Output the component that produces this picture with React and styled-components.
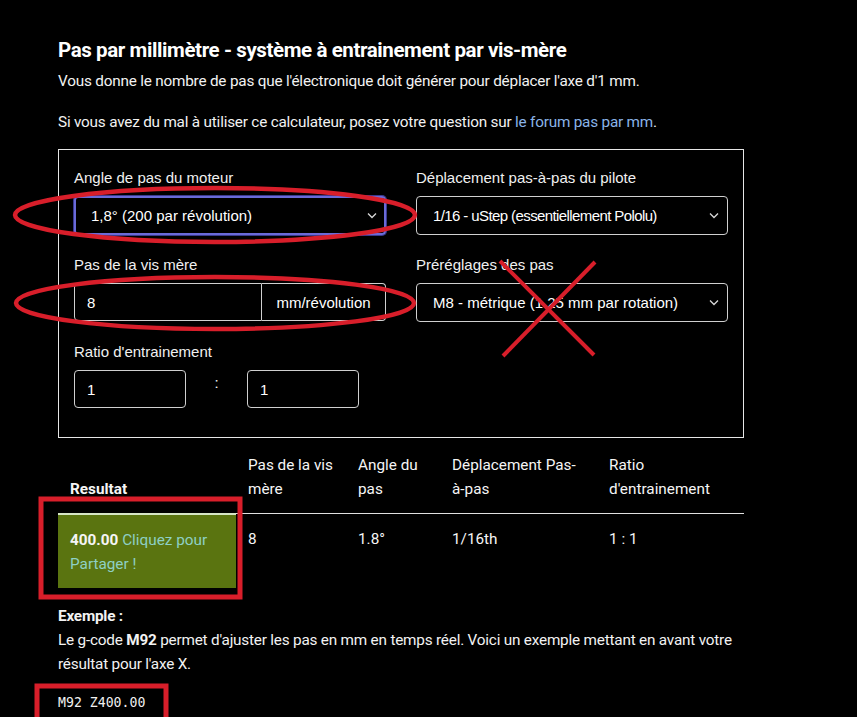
import React from 'react';
import styled, { createGlobalStyle } from 'styled-components';

const GlobalStyle = createGlobalStyle`
	html, body {
		margin: 0;
		padding: 0;
		background: #000000;
	}
	body {
		font-family: Roboto, "Liberation Sans", sans-serif;
		color: #ffffff;
	}
`

const Page = styled.div`
	position: relative;
	width: 857px;
	height: 717px;
	overflow: hidden;
	background: #000;
	padding: 37px 0 0 58px;
	box-sizing: border-box;
`

const Title = styled.h2`
	margin: 0;
	font-size: 20.5px;
	font-weight: 700;
	letter-spacing: -0.4px;
	line-height: 26px;
`

const Text = styled.p`
	margin: ${props => props.margin || '0'};
	font-size: 15.3px;
	line-height: 24px;
	letter-spacing: -0.2px;
	color: #f2f2f2;
	width: ${props => props.width || 'auto'};
`

const Link = styled.a`
	color: #8ab4e8;
	text-decoration: none;
`

const FormBox = styled.div`
	width: 686px;
	height: 289px;
	box-sizing: border-box;
	border: 1px solid #e6e6e6;
	margin-top: 15px;
	padding: 18px 15px 0 15px;
	display: grid;
	grid-template-columns: 312px 312px;
	column-gap: 30px;
	align-content: start;
`

const Field = styled.div`
	display: flex;
	flex-direction: column;
	margin-bottom: 20px;
`

const Label = styled.label`
	font-family: "Liberation Sans", Arial, sans-serif;
	font-size: 15px;
	line-height: 20px;
	color: #f0f0f0;
	margin-bottom: 8px;
`

const SelectBox = styled.div`
	height: 39px;
	box-sizing: border-box;
	border: ${props => props.focused ? '2px solid #6a6ad8' : '1px solid #d0d0d0'};
	box-shadow: ${props => props.focused ? '0 0 0 1px #3a3a90' : 'none'};
	border-radius: 4px;
	display: flex;
	align-items: center;
	justify-content: space-between;
	padding: 0 ${props => props.focused ? '7px' : '8px'} 0 ${props => props.focused ? '15px' : '16px'};
	font-family: "Liberation Sans", Arial, sans-serif;
	font-size: 15px;
	letter-spacing: ${props => props.tight ? '-0.6px' : '0'};
	color: #fff;
`

const Chevron = () => (
	<svg width="10" height="7" viewBox="0 0 10 7" fill="none">
		<path d="M1 1.5 L5 5.5 L9 1.5" stroke="#d8d8d8" strokeWidth="1.3" />
	</svg>
)

const InputGroup = styled.div`
	display: flex;
	height: 38px;
`

const TextInput = styled.div`
	width: ${props => props.width || '188px'};
	height: 38px;
	box-sizing: border-box;
	border: 1px solid #d0d0d0;
	border-radius: ${props => props.radius || '4px 0 0 4px'};
	display: flex;
	align-items: center;
	padding-left: 12px;
	font-family: "Liberation Sans", Arial, sans-serif;
	font-size: 15px;
`

const Addon = styled.div`
	flex: 1;
	box-sizing: border-box;
	border: 1px solid #d0d0d0;
	border-left: none;
	border-radius: 0 4px 4px 0;
	display: flex;
	align-items: center;
	justify-content: center;
	font-family: "Liberation Sans", Arial, sans-serif;
	font-size: 15px;
`

const RatioRow = styled.div`
	display: flex;
	align-items: center;
`

const Colon = styled.span`
	width: 61px;
	text-align: center;
	font-size: 15px;
	margin-top: -12px;
`

const Table = styled.table`
	width: 686px;
	border-collapse: collapse;
	margin-top: 15px;
	font-size: 15.3px;
`

const Th = styled.th`
	text-align: left;
	vertical-align: bottom;
	font-weight: ${props => props.bold ? 700 : 400};
	padding: 0 12px 12px 12px;
	line-height: 24px;
	width: ${props => props.width};
	border-bottom: 1px solid #e0e0e0;
	color: #f5f5f5;
`

const Td = styled.td`
	vertical-align: top;
	padding: 13px 12px 12px 12px;
	line-height: 24px;
	color: #f5f5f5;
	background: ${props => props.result ? '#5a7410' : 'transparent'};
	border-top: ${props => props.result ? '2px solid #d6e6c6' : 'none'};
`

const Share = styled.span`
	color: #8ed0c4;
`

const Code = styled.code`
	display: block;
	margin-top: 19px;
	font-family: "DejaVu Sans Mono", "Liberation Mono", monospace;
	font-size: 13.2px;
	color: #f0f0f0;
`

const Overlay = styled.svg`
	position: absolute;
	left: 0;
	top: 0;
	pointer-events: none;
`

const Annotations = () => (
	<Overlay width="857" height="717" viewBox="0 0 857 717">
		<g stroke="#d81e2a" fill="none">
			<ellipse cx="215" cy="215" rx="200" ry="27" strokeWidth="4.5" />
			<ellipse cx="215" cy="303" rx="199" ry="26" strokeWidth="4.5" />
			<line x1="500" y1="261" x2="594" y2="355" strokeWidth="4" />
			<line x1="595" y1="262" x2="503" y2="356" strokeWidth="4" />
			<rect x="41" y="499" width="199" height="98" strokeWidth="5" />
			<rect x="37" y="686" width="129" height="36" strokeWidth="5" />
		</g>
	</Overlay>
)

const App = () => {
	return (
		<Page>
			<GlobalStyle />
			<Title>Pas par millimètre - système à entrainement par vis-mère</Title>
			<Text margin="6px 0 0 0">Vous donne le nombre de pas que l'électronique doit générer pour déplacer l'axe d'1 mm.</Text>
			<Text margin="17px 0 0 0">Si vous avez du mal à utiliser ce calculateur, posez votre question sur <Link href="#">le forum pas par mm</Link>.</Text>

			<FormBox>
				<Field>
					<Label>Angle de pas du moteur</Label>
					<SelectBox focused>1,8° (200 par révolution)<Chevron /></SelectBox>
				</Field>
				<Field>
					<Label>Déplacement pas-à-pas du pilote</Label>
					<SelectBox tight>1/16 - uStep (essentiellement Pololu)<Chevron /></SelectBox>
				</Field>
				<Field>
					<Label>Pas de la vis mère</Label>
					<InputGroup>
						<TextInput>8</TextInput>
						<Addon>mm/révolution</Addon>
					</InputGroup>
				</Field>
				<Field>
					<Label>Préréglages des pas</Label>
					<SelectBox>M8 - métrique (1.25 mm par rotation)<Chevron /></SelectBox>
				</Field>
				<Field>
					<Label>Ratio d'entrainement</Label>
					<RatioRow>
						<TextInput width="112px" radius="4px">1</TextInput>
						<Colon>:</Colon>
						<TextInput width="112px" radius="4px">1</TextInput>
					</RatioRow>
				</Field>
			</FormBox>

			<Table>
				<thead>
					<tr>
						<Th bold width="154px">Resultat</Th>
						<Th width="86px">Pas de la vis mère</Th>
						<Th width="70px">Angle du pas</Th>
						<Th width="133px">Déplacement Pas-à-pas</Th>
						<Th>Ratio d'entrainement</Th>
					</tr>
				</thead>
				<tbody>
					<tr>
						<Td result><b>400.00</b> <Share>Cliquez pour Partager !</Share></Td>
						<Td>8</Td>
						<Td>1.8°</Td>
						<Td>1/16th</Td>
						<Td>1 : 1</Td>
					</tr>
				</tbody>
			</Table>

			<Text margin="16px 0 0 0"><b>Exemple :</b></Text>
			<Text width="690px">Le g-code <b>M92</b> permet d'ajuster les pas en mm en temps réel. Voici un exemple mettant en avant votre résultat pour l'axe X.</Text>
			<Code>M92 Z400.00</Code>

			<Annotations />
		</Page>
	);
};

export default App;
